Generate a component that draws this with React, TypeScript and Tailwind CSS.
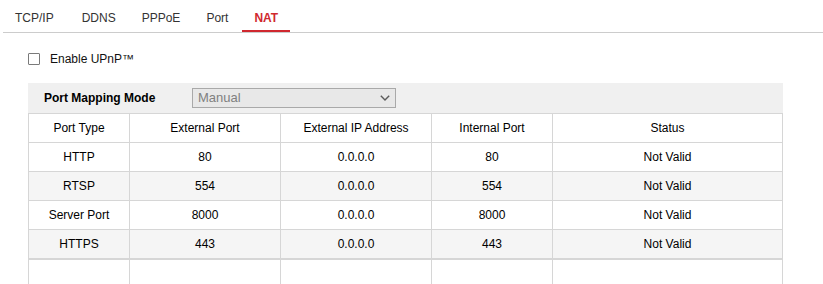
import React from "react";

const tabs = ["TCP/IP", "DDNS", "PPPoE", "Port", "NAT"];

const rows = [
  { type: "HTTP", ext: "80", ip: "0.0.0.0", int: "80", status: "Not Valid" },
  { type: "RTSP", ext: "554", ip: "0.0.0.0", int: "554", status: "Not Valid" },
  { type: "Server Port", ext: "8000", ip: "0.0.0.0", int: "8000", status: "Not Valid" },
  { type: "HTTPS", ext: "443", ip: "0.0.0.0", int: "443", status: "Not Valid" },
];

const gridCols = "grid grid-cols-[101px_151px_151px_121px_230px]";
const cell = "flex items-center justify-center border-r border-b border-[#d6d6d6] h-[29px]";

const App: React.FC = () => {
  return (
    <div className="w-[823px] h-[284px] overflow-hidden bg-white text-[12px] leading-[14px] text-black font-['Liberation_Sans',Arial,sans-serif]">
      {/* tab bar */}
      <div className="ml-[3px] flex gap-[2px] border-b border-[#cccccc]">
        {tabs.map((t, i) => {
          const active = t === "NAT";
          const pad = i === 0 ? "pl-[12px] pr-[14px]" : "px-[12px]";
          return (
            <div
              key={t}
              className={
                active
                  ? `${pad} pt-[11px] pb-[5px] border-b-2 border-[#d0282f] text-[#d0282f] font-bold`
                  : `${pad} pt-[11px] pb-[5px] border-b-2 border-transparent text-[#333333]`
              }
            >
              {t}
            </div>
          );
        })}
      </div>

      {/* upnp */}
      <div className="ml-[28px] mt-[19px] flex items-center gap-[10px]">
        <span className="w-[12px] h-[12px] border border-[#7a7a7a] rounded-[1px] bg-white" />
        <span className="text-[#111111]">Enable UPnP™</span>
      </div>

      {/* mapping section */}
      <div className="ml-[28px] mt-[17px] w-[755px]">
        <div className="h-[30px] bg-[#f0f0f0] flex items-center">
          <span className="w-[164px] pl-[16px] font-bold">Port Mapping Mode</span>
          <div className="w-[204px] h-[20px] border border-[#a9a9a9] bg-[#e8e8e8] flex items-center justify-between pl-[5px] pr-[5px]">
            <span className="text-[13px] text-[#808080]">Manual</span>
            <svg width="10" height="6" viewBox="0 0 10 6">
              <polyline points="0.8,0.8 5,5 9.2,0.8" fill="none" stroke="#5a5a5a" strokeWidth="1.4" />
            </svg>
          </div>
        </div>

        <div className="border-l border-t border-[#d6d6d6]">
          <div className={gridCols}>
            <div className={cell}>Port Type</div>
            <div className={cell}>External Port</div>
            <div className={cell}>External IP Address</div>
            <div className={cell}>Internal Port</div>
            <div className={cell}>Status</div>
          </div>
          {rows.map((r, i) => (
            <div key={r.type} className={`${gridCols} ${i % 2 === 1 ? "bg-[#f5f5f5]" : "bg-white"}`}>
              <div className={cell}>{r.type}</div>
              <div className={cell}>{r.ext}</div>
              <div className={cell}>{r.ip}</div>
              <div className={cell}>{r.int}</div>
              <div className={cell}>{r.status}</div>
            </div>
          ))}
          <div className={`${gridCols} border-t border-[#d6d6d6]`}>
            <div className="h-[40px] border-r border-[#d6d6d6]" />
            <div className="h-[40px] border-r border-[#d6d6d6]" />
            <div className="h-[40px] border-r border-[#d6d6d6]" />
            <div className="h-[40px] border-r border-[#d6d6d6]" />
            <div className="h-[40px] border-r border-[#d6d6d6]" />
          </div>
        </div>
      </div>
    </div>
  );
};

export default App;
